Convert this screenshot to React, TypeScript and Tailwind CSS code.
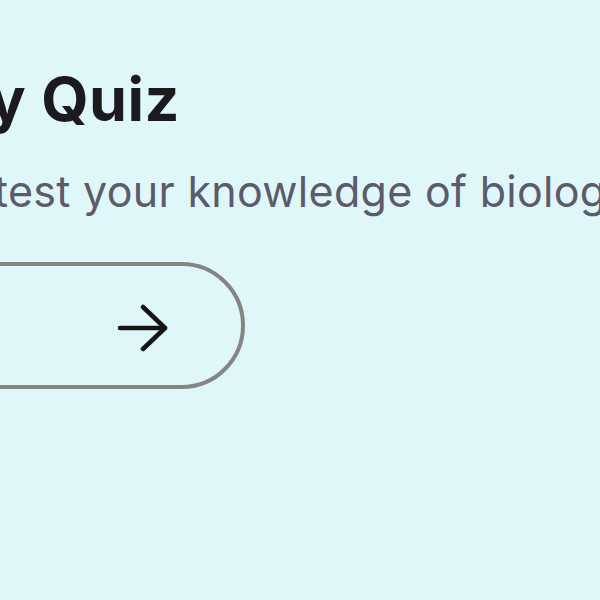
import React from "react";

export default function App() {
  return (
    <div className="w-[600px] h-[600px] overflow-hidden bg-[#e0f7fa] [font-family:Inter,'Noto_Sans',sans-serif]">
      <div className="flex w-[180px] justify-end pt-[61px]">
        <h1 className="whitespace-nowrap text-[61px] font-bold leading-[76px] tracking-[0.5px] text-[#1b1b1f]">
          Biology Quiz
        </h1>
      </div>
      <p className="-ml-[6px] mt-[24px] whitespace-nowrap text-[43px] leading-[60px] tracking-[0.3px] text-[#5b5b6b]">
        test your knowledge of biology
      </p>
      <div className="mt-[41px] flex w-[245px] justify-end">
        <button className="flex h-[127px] w-[600px] shrink-0 items-center justify-end rounded-full border-[4px] border-[#858585] pr-[72px]">
          <svg className="mt-[4px]" width="52" height="48" viewBox="0 0 52 48" fill="none" stroke="#151515" strokeWidth="4.5" strokeLinecap="round" strokeLinejoin="round">
            <path d="M3 24h45" />
            <path d="M26 3l22 21-22 21" />
          </svg>
        </button>
      </div>
    </div>
  );
}
